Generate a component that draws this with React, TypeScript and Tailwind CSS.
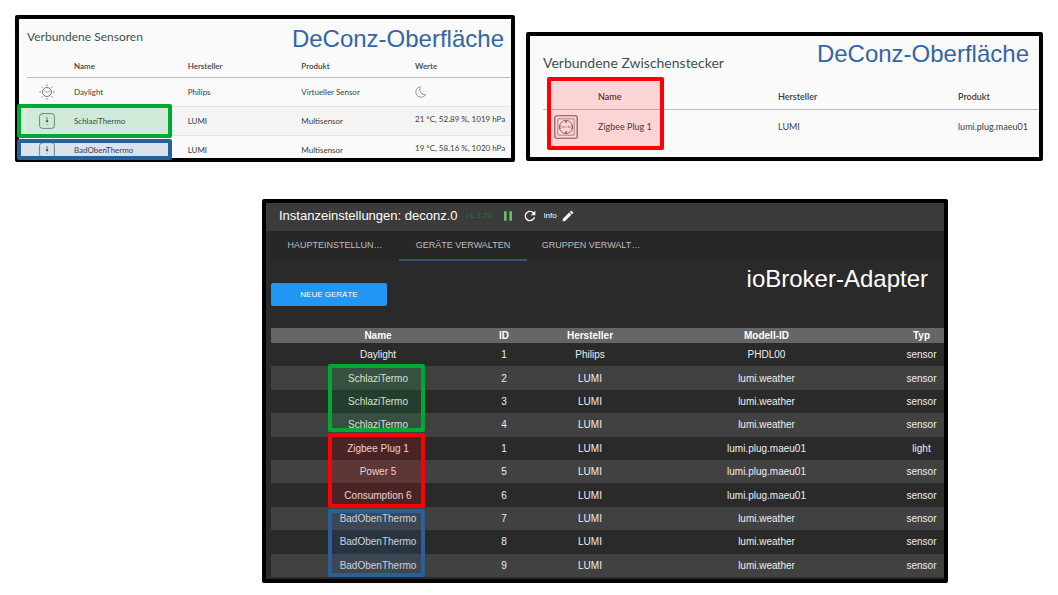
import { MdEdit, MdPause, MdRefresh } from 'react-icons/md';

const sensors = [
  { icon: 'sun', name: 'Daylight', vendor: 'Philips', product: 'Virtueller Sensor', values: '' },
  { icon: 'thermo', name: 'SchlaziThermo', vendor: 'LUMI', product: 'Multisensor', values: '21 °C, 52.89 %, 1019 hPa' },
  { icon: 'thermo', name: 'BadObenThermo', vendor: 'LUMI', product: 'Multisensor', values: '19 °C, 58.16 %, 1020 hPa' },
];

const devices = [
  { name: 'Daylight', id: 1, vendor: 'Philips', model: 'PHDL00', type: 'sensor' },
  { name: 'SchlaziTermo', id: 2, vendor: 'LUMI', model: 'lumi.weather', type: 'sensor' },
  { name: 'SchlaziTermo', id: 3, vendor: 'LUMI', model: 'lumi.weather', type: 'sensor' },
  { name: 'SchlaziTermo', id: 4, vendor: 'LUMI', model: 'lumi.weather', type: 'sensor' },
  { name: 'Zigbee Plug 1', id: 1, vendor: 'LUMI', model: 'lumi.plug.maeu01', type: 'light' },
  { name: 'Power 5', id: 5, vendor: 'LUMI', model: 'lumi.plug.maeu01', type: 'sensor' },
  { name: 'Consumption 6', id: 6, vendor: 'LUMI', model: 'lumi.plug.maeu01', type: 'sensor' },
  { name: 'BadObenThermo', id: 7, vendor: 'LUMI', model: 'lumi.weather', type: 'sensor' },
  { name: 'BadObenThermo', id: 8, vendor: 'LUMI', model: 'lumi.weather', type: 'sensor' },
  { name: 'BadObenThermo', id: 9, vendor: 'LUMI', model: 'lumi.weather', type: 'sensor' },
];

const tabs = [
  { label: 'HAUPTEINSTELLUN…', active: false },
  { label: 'GERÄTE VERWALTEN', active: true },
  { label: 'GRUPPEN VERWALT…', active: false },
];

function SunIcon() {
  return (
    <svg viewBox="0 0 16 16" className="size-4" fill="none" stroke="#5c6b6b" strokeWidth="0.9" strokeLinecap="round">
      <circle cx="8" cy="8" r="4.5" />
      <path d="M5.8 7.2 7.8 8.4 10.2 7.2" strokeWidth="0.6" />
      <path d="M8 .8v.8M8 14.4v.8M.8 8h.8M14.4 8h.8M2.9 2.9l.5.5M12.6 12.6l.5.5M2.9 13.1l.5-.5M12.6 3.4l.5-.5" />
    </svg>
  );
}

function ThermoIcon() {
  return (
    <svg viewBox="0 0 16 16" className="size-4" fill="none" stroke="#5c6b6b" strokeLinecap="round">
      <rect x="0.6" y="0.6" width="14.8" height="14.8" rx="2.8" strokeWidth="0.8" />
      <path d="M8 4.5v4.5" strokeWidth="0.9" />
      <circle cx="8" cy="8.2" r="0.8" fill="#3c4a4a" stroke="#3c4a4a" strokeWidth="0.6" />
      <path d="M8 11.4v.2" strokeWidth="0.8" />
    </svg>
  );
}

function MoonIcon() {
  return (
    <svg viewBox="0 0 12 12" className="size-3" fill="none" stroke="#77807f" strokeWidth="0.8" strokeLinejoin="round">
      <path d="M5.2.8C2.6 1.2.8 3.3.8 6c0 3 2.3 5.2 5.2 5.2 2 0 3.7-1 4.6-2.7C7 9.3 3.5 6 5.2.8Z" />
    </svg>
  );
}

function SocketIcon() {
  return (
    <svg viewBox="0 0 24 24" className="size-6" fill="none" stroke="#6b5858">
      <rect x="0.8" y="0.8" width="22.4" height="22.4" rx="1.8" strokeWidth="1.1" />
      <rect x="3.8" y="3.8" width="16.4" height="16.4" rx="0.6" strokeWidth="0.6" />
      <circle cx="12" cy="12" r="6.6" strokeWidth="0.8" />
      <path d="M12 5.4v2.4M12 16.2v2.4" strokeWidth="1.4" />
      <path d="M5.6 10.5h1.2v3H5.6M18.4 10.5h-1.2v3h1.2" strokeWidth="0.5" />
      <path d="M8.4 12h2M11.6 12h.8M13.6 12h2" strokeWidth="1" />
    </svg>
  );
}

function SensorPanel() {
  return (
    <section className="relative h-[147px] rounded-xs border-4 border-black bg-[#fafafa]">
      <div className="h-full overflow-hidden pl-2">
        <div className="flex h-9 items-center justify-between pr-[7px] pt-1">
          <h2 className="pb-1 font-[Lato,sans-serif] text-[12px] text-[#3f5154]">Verbundene Sensoren</h2>
          <p className="text-2xl text-[#3465a4]">DeConz-Oberfläche</p>
        </div>
        <table className="w-full table-fixed text-left font-[Lato,sans-serif] text-[8px] leading-3 text-[#3d3d3d]">
          <colgroup>
            <col className="w-[47px]" />
            <col />
            <col />
            <col />
            <col className="w-[96px]" />
          </colgroup>
          <thead>
            <tr className="h-[22px] border-b border-[#bdbdbd]">
              <th />
              <th className="font-semibold">Name</th>
              <th className="font-semibold">Hersteller</th>
              <th className="font-semibold">Produkt</th>
              <th className="font-semibold">Werte</th>
            </tr>
          </thead>
          <tbody>
            {sensors.map((sensor) => (
              <tr key={sensor.name} className="h-[29px] border-b border-[#e4e4e4] even:bg-[#f4f4f4]">
                <td className="pl-3">{sensor.icon === 'sun' ? <SunIcon /> : <ThermoIcon />}</td>
                <td>{sensor.name}</td>
                <td>{sensor.vendor}</td>
                <td>{sensor.product}</td>
                {sensor.values ? (
                  <td className="whitespace-nowrap pb-1">{sensor.values}</td>
                ) : (
                  <td><MoonIcon /></td>
                )}
              </tr>
            ))}
          </tbody>
        </table>
      </div>

      {/* Markers */}
      <div className="absolute -left-0.5 top-[85px] h-[34px] w-[155px] rounded-xs border-4 border-[#00a933] bg-[#00a933]/15" />
      <div className="absolute -left-0.5 top-[120px] h-[21px] w-[155px] rounded-xs border-4 border-[#2a6099] bg-[#2a6099]/15" />
    </section>
  );
}

function PlugPanel() {
  return (
    <section className="relative mt-[17px] h-[129px] rounded-xs border-4 border-black bg-[#fafafa] pl-[13px]">
      <div className="flex justify-between pr-2.5">
        <h2 className="pt-4 font-[Lato,sans-serif] text-[14px] text-[#3f5154]">Verbundene Zwischenstecker</h2>
        <p className="pt-0.5 text-2xl text-[#3465a4]">DeConz-Oberfläche</p>
      </div>
      <table className="mt-3 w-full table-fixed text-left font-[Lato,sans-serif] text-[9px] leading-3 text-[#3d3d3d]">
        <colgroup>
          <col className="w-[55px]" />
          <col />
          <col />
          <col className="w-[81px]" />
        </colgroup>
        <thead>
          <tr className="h-[24px] border-b border-[#bdbdbd]">
            <th />
            <th className="font-semibold">Name</th>
            <th className="font-semibold">Hersteller</th>
            <th className="font-semibold">Produkt</th>
          </tr>
        </thead>
        <tbody>
          <tr className="h-[35px]">
            <td className="pl-[11px]"><SocketIcon /></td>
            <td>Zigbee Plug 1</td>
            <td>LUMI</td>
            <td>lumi.plug.maeu01</td>
          </tr>
        </tbody>
      </table>

      {/* Marker */}
      <div className="absolute left-[17px] top-[41px] h-[73px] w-[117px] rounded-xs border-4 border-[#ff0000] bg-[#ff0000]/15" />
    </section>
  );
}

function AdapterPanel() {
  return (
    <section className="relative rounded-xs border-4 border-black bg-[#2a2a2a] text-white">
      <header className="flex h-7 items-center bg-[#3b3b3b] pb-0.5 pl-[13px]">
        <h1 className="text-[13px]">Instanzeinstellungen: deconz.0</h1>
        <span className="ml-2 text-[8px] text-[#2f7033]">v1.3.23</span>
        <button type="button" aria-label="Pause" className="ml-2 text-[#66bb6a]"><MdPause className="size-4" /></button>
        <button type="button" aria-label="Neu laden" className="ml-1.5"><MdRefresh className="size-4" /></button>
        <span className="ml-1.5 text-[8px]">info</span>
        <button type="button" aria-label="Bearbeiten" className="ml-1"><MdEdit className="size-3.5" /></button>
      </header>

      <div className="overflow-hidden pb-0.5 pl-[5px]">
        <nav className="flex h-[30px] bg-[#272727]">
          {tabs.map((tab) => (
            <button
              key={tab.label}
              type="button"
              className={
                tab.active
                  ? 'w-32 border-b-2 border-[#3c536f] pt-0.5 text-[9px] text-[#bdbdbd]'
                  : 'w-32 border-b-2 border-transparent pt-0.5 text-[9px] text-[#bdbdbd]'
              }
            >
              {tab.label}
            </button>
          ))}
        </nav>

        <div className="flex h-[67px] items-start justify-between pr-4">
          <button type="button" className="mt-[22px] h-[23px] w-[116px] rounded-xs bg-[#2196f3] text-[8px] shadow">
            NEUE GERÄTE
          </button>
          <p className="pt-0.5 text-2xl">ioBroker-Adapter</p>
        </div>

        <div className="-mr-[23px]">
          <table className="h-[249px] w-full table-fixed text-center text-[10px] leading-3">
            <colgroup>
              <col className="w-[214px]" />
              <col className="w-[38px]" />
              <col className="w-[134px]" />
              <col />
              <col className="w-[91px]" />
            </colgroup>
            <thead>
              <tr className="h-[15px] bg-[#666666]">
                <th>Name</th>
                <th>ID</th>
                <th>Hersteller</th>
                <th>Modell-ID</th>
                <th>Typ</th>
              </tr>
            </thead>
            <tbody>
              {devices.map((device, index) => (
                <tr key={index} className="h-[23px] text-[#eeeeee] even:bg-[#414141]">
                  <td className="pt-px">{device.name}</td>
                  <td className="pt-px">{device.id}</td>
                  <td className="pt-px">{device.vendor}</td>
                  <td className="pt-px">{device.model}</td>
                  <td className="pt-px">{device.type}</td>
                </tr>
              ))}
            </tbody>
          </table>
        </div>
      </div>

      {/* Markers */}
      <div className="absolute left-[62px] top-[161px] h-[68px] w-[97px] rounded-xs border-4 border-[#00a933] bg-[#00a933]/15" />
      <div className="absolute left-[62px] top-[230px] h-[75px] w-[97px] rounded-xs border-4 border-[#ff0000] bg-[#ff0000]/15" />
      <div className="absolute left-[62px] top-[306px] h-[68px] w-[97px] rounded-xs border-4 border-[#2a6099] bg-[#2a6099]/20" />
    </section>
  );
}

export default function App() {
  return (
    <main className="min-h-screen bg-white pt-[15px] font-['Liberation_Sans',Arial,sans-serif]">
      <div className="grid grid-cols-[500fr_517fr] items-start gap-[11px] px-[15px]">
        <SensorPanel />
        <PlugPanel />
      </div>
      <div className="ml-[262px] mr-[110px] mt-[37px]">
        <AdapterPanel />
      </div>
    </main>
  );
}
